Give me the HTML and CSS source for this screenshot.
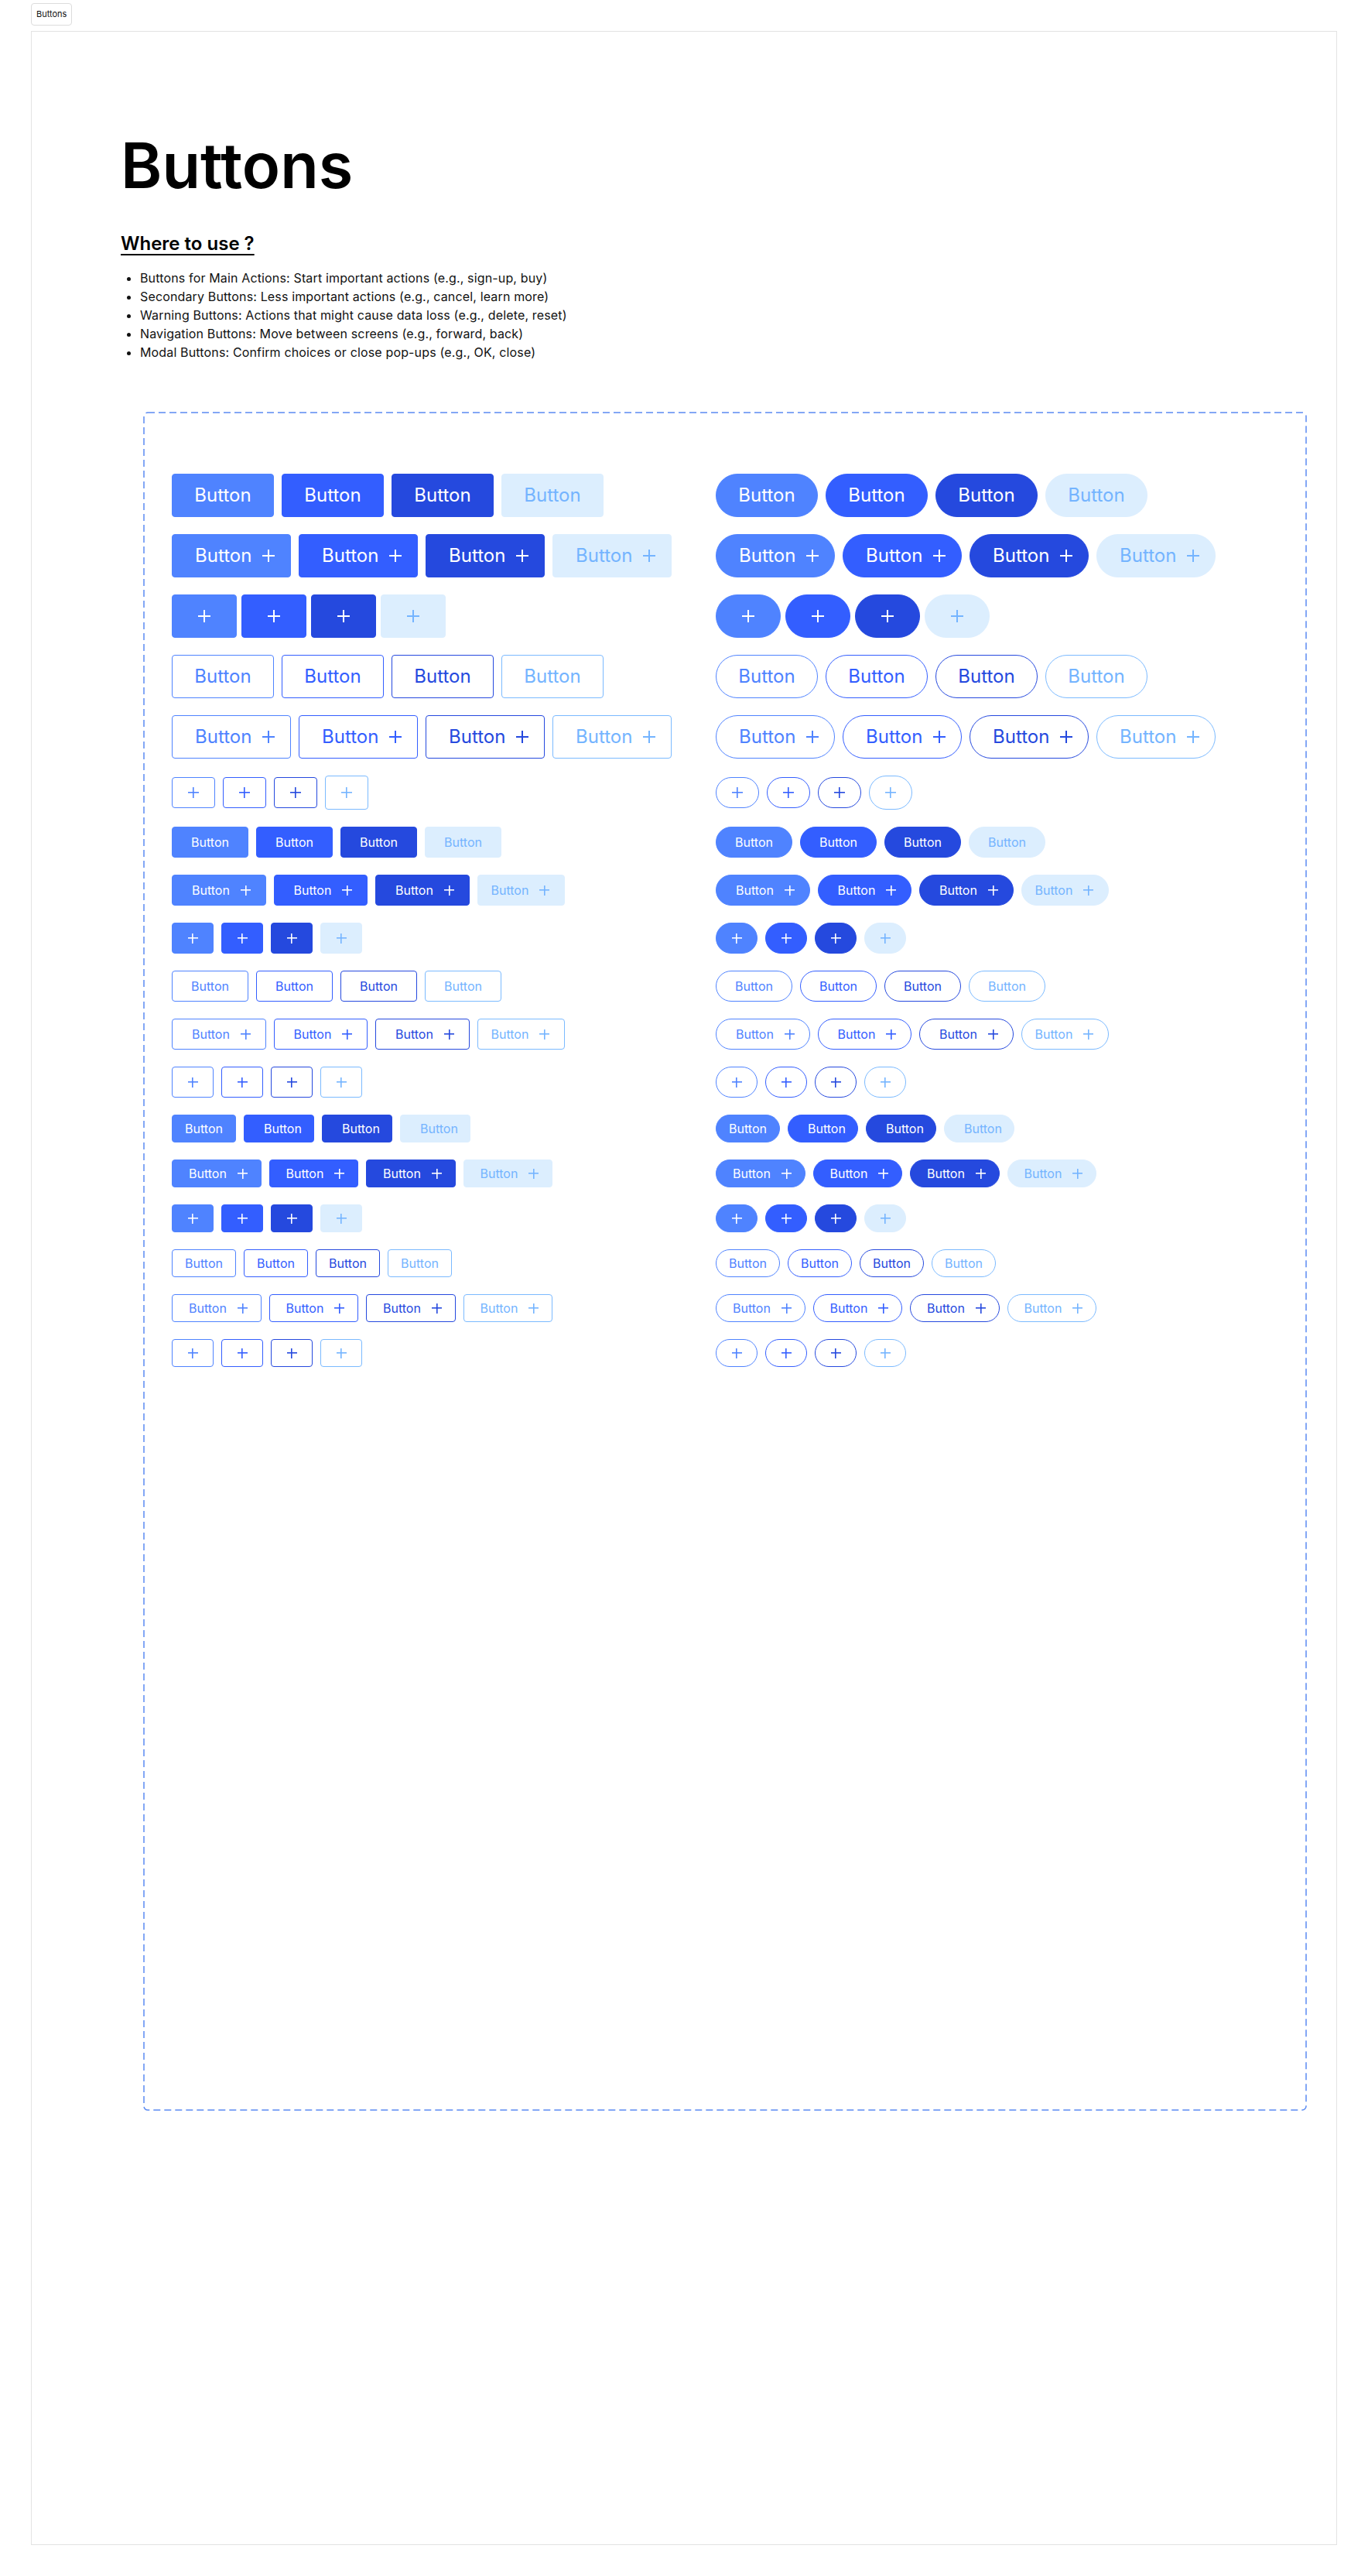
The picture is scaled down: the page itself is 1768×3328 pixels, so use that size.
FILE: index.html
```html
<html lang="en">
<head>
    <meta charset="UTF-8">
    <meta name="viewport" content="width=device-width, initial-scale=1.0">
    <title>Buttons</title>
    <link rel="stylesheet" href="styles.css">
</head>
<body>
    <div class="tab">Buttons</div>
    <main class="frame">
        <h1 class="title">Buttons</h1>
        <h2 class="subtitle">Where to use ?</h2>
        <ul class="uses">
            <li>Buttons for Main Actions: Start important actions (e.g., sign-up, buy)</li>
            <li>Secondary Buttons: Less important actions (e.g., cancel, learn more)</li>
            <li>Warning Buttons: Actions that might cause data loss (e.g., delete, reset)</li>
            <li>Navigation Buttons: Move between screens (e.g., forward, back)</li>
            <li>Modal Buttons: Confirm choices or close pop-ups (e.g., OK, close)</li>
        </ul>

        <section class="board">
            <svg class="board-edge"><rect x="1" y="1" rx="5" ry="5"></rect></svg>

            <!-- square corners -->
            <div class="column square">
                <div class="row lg text fill">
                    <button class="btn t1">Button</button>
                    <button class="btn t2">Button</button>
                    <button class="btn t3">Button</button>
                    <button class="btn t4">Button</button>
                </div>
                <div class="row lg icon-text fill">
                    <button class="btn t1">Button<i class="plus"></i></button>
                    <button class="btn t2">Button<i class="plus"></i></button>
                    <button class="btn t3">Button<i class="plus"></i></button>
                    <button class="btn t4">Button<i class="plus"></i></button>
                </div>
                <div class="row lg icon fill">
                    <button class="btn t1"><i class="plus"></i></button>
                    <button class="btn t2"><i class="plus"></i></button>
                    <button class="btn t3"><i class="plus"></i></button>
                    <button class="btn t4"><i class="plus"></i></button>
                </div>
                <div class="row lg text line">
                    <button class="btn t1">Button</button>
                    <button class="btn t2">Button</button>
                    <button class="btn t3">Button</button>
                    <button class="btn t4">Button</button>
                </div>
                <div class="row lg icon-text line">
                    <button class="btn t1">Button<i class="plus"></i></button>
                    <button class="btn t2">Button<i class="plus"></i></button>
                    <button class="btn t3">Button<i class="plus"></i></button>
                    <button class="btn t4">Button<i class="plus"></i></button>
                </div>
                <div class="row md icon line wide">
                    <button class="btn t1"><i class="plus"></i></button>
                    <button class="btn t2"><i class="plus"></i></button>
                    <button class="btn t3"><i class="plus"></i></button>
                    <button class="btn t4"><i class="plus"></i></button>
                </div>

                <div class="row md text fill">
                    <button class="btn t1">Button</button>
                    <button class="btn t2">Button</button>
                    <button class="btn t3">Button</button>
                    <button class="btn t4">Button</button>
                </div>
                <div class="row md icon-text fill">
                    <button class="btn t1">Button<i class="plus"></i></button>
                    <button class="btn t2">Button<i class="plus"></i></button>
                    <button class="btn t3">Button<i class="plus"></i></button>
                    <button class="btn t4">Button<i class="plus"></i></button>
                </div>
                <div class="row md icon fill">
                    <button class="btn t1"><i class="plus"></i></button>
                    <button class="btn t2"><i class="plus"></i></button>
                    <button class="btn t3"><i class="plus"></i></button>
                    <button class="btn t4"><i class="plus"></i></button>
                </div>
                <div class="row md text line">
                    <button class="btn t1">Button</button>
                    <button class="btn t2">Button</button>
                    <button class="btn t3">Button</button>
                    <button class="btn t4">Button</button>
                </div>
                <div class="row md icon-text line">
                    <button class="btn t1">Button<i class="plus"></i></button>
                    <button class="btn t2">Button<i class="plus"></i></button>
                    <button class="btn t3">Button<i class="plus"></i></button>
                    <button class="btn t4">Button<i class="plus"></i></button>
                </div>
                <div class="row md icon line">
                    <button class="btn t1"><i class="plus"></i></button>
                    <button class="btn t2"><i class="plus"></i></button>
                    <button class="btn t3"><i class="plus"></i></button>
                    <button class="btn t4"><i class="plus"></i></button>
                </div>

                <div class="row sm text fill">
                    <button class="btn t1">Button</button>
                    <button class="btn t2">Button</button>
                    <button class="btn t3">Button</button>
                    <button class="btn t4">Button</button>
                </div>
                <div class="row sm icon-text fill">
                    <button class="btn t1">Button<i class="plus"></i></button>
                    <button class="btn t2">Button<i class="plus"></i></button>
                    <button class="btn t3">Button<i class="plus"></i></button>
                    <button class="btn t4">Button<i class="plus"></i></button>
                </div>
                <div class="row sm icon fill">
                    <button class="btn t1"><i class="plus"></i></button>
                    <button class="btn t2"><i class="plus"></i></button>
                    <button class="btn t3"><i class="plus"></i></button>
                    <button class="btn t4"><i class="plus"></i></button>
                </div>
                <div class="row sm text line">
                    <button class="btn t1">Button</button>
                    <button class="btn t2">Button</button>
                    <button class="btn t3">Button</button>
                    <button class="btn t4">Button</button>
                </div>
                <div class="row sm icon-text line">
                    <button class="btn t1">Button<i class="plus"></i></button>
                    <button class="btn t2">Button<i class="plus"></i></button>
                    <button class="btn t3">Button<i class="plus"></i></button>
                    <button class="btn t4">Button<i class="plus"></i></button>
                </div>
                <div class="row sm icon line">
                    <button class="btn t1"><i class="plus"></i></button>
                    <button class="btn t2"><i class="plus"></i></button>
                    <button class="btn t3"><i class="plus"></i></button>
                    <button class="btn t4"><i class="plus"></i></button>
                </div>
            </div>

            <!-- round corners -->
            <div class="column pill">
                <div class="row lg text fill">
                    <button class="btn t1">Button</button>
                    <button class="btn t2">Button</button>
                    <button class="btn t3">Button</button>
                    <button class="btn t4">Button</button>
                </div>
                <div class="row lg icon-text fill">
                    <button class="btn t1">Button<i class="plus"></i></button>
                    <button class="btn t2">Button<i class="plus"></i></button>
                    <button class="btn t3">Button<i class="plus"></i></button>
                    <button class="btn t4">Button<i class="plus"></i></button>
                </div>
                <div class="row lg icon fill">
                    <button class="btn t1"><i class="plus"></i></button>
                    <button class="btn t2"><i class="plus"></i></button>
                    <button class="btn t3"><i class="plus"></i></button>
                    <button class="btn t4"><i class="plus"></i></button>
                </div>
                <div class="row lg text line">
                    <button class="btn t1">Button</button>
                    <button class="btn t2">Button</button>
                    <button class="btn t3">Button</button>
                    <button class="btn t4">Button</button>
                </div>
                <div class="row lg icon-text line">
                    <button class="btn t1">Button<i class="plus"></i></button>
                    <button class="btn t2">Button<i class="plus"></i></button>
                    <button class="btn t3">Button<i class="plus"></i></button>
                    <button class="btn t4">Button<i class="plus"></i></button>
                </div>
                <div class="row md icon line wide">
                    <button class="btn t1"><i class="plus"></i></button>
                    <button class="btn t2"><i class="plus"></i></button>
                    <button class="btn t3"><i class="plus"></i></button>
                    <button class="btn t4"><i class="plus"></i></button>
                </div>

                <div class="row md text fill">
                    <button class="btn t1">Button</button>
                    <button class="btn t2">Button</button>
                    <button class="btn t3">Button</button>
                    <button class="btn t4">Button</button>
                </div>
                <div class="row md icon-text fill">
                    <button class="btn t1">Button<i class="plus"></i></button>
                    <button class="btn t2">Button<i class="plus"></i></button>
                    <button class="btn t3">Button<i class="plus"></i></button>
                    <button class="btn t4">Button<i class="plus"></i></button>
                </div>
                <div class="row md icon fill">
                    <button class="btn t1"><i class="plus"></i></button>
                    <button class="btn t2"><i class="plus"></i></button>
                    <button class="btn t3"><i class="plus"></i></button>
                    <button class="btn t4"><i class="plus"></i></button>
                </div>
                <div class="row md text line">
                    <button class="btn t1">Button</button>
                    <button class="btn t2">Button</button>
                    <button class="btn t3">Button</button>
                    <button class="btn t4">Button</button>
                </div>
                <div class="row md icon-text line">
                    <button class="btn t1">Button<i class="plus"></i></button>
                    <button class="btn t2">Button<i class="plus"></i></button>
                    <button class="btn t3">Button<i class="plus"></i></button>
                    <button class="btn t4">Button<i class="plus"></i></button>
                </div>
                <div class="row md icon line">
                    <button class="btn t1"><i class="plus"></i></button>
                    <button class="btn t2"><i class="plus"></i></button>
                    <button class="btn t3"><i class="plus"></i></button>
                    <button class="btn t4"><i class="plus"></i></button>
                </div>

                <div class="row sm text fill">
                    <button class="btn t1">Button</button>
                    <button class="btn t2">Button</button>
                    <button class="btn t3">Button</button>
                    <button class="btn t4">Button</button>
                </div>
                <div class="row sm icon-text fill">
                    <button class="btn t1">Button<i class="plus"></i></button>
                    <button class="btn t2">Button<i class="plus"></i></button>
                    <button class="btn t3">Button<i class="plus"></i></button>
                    <button class="btn t4">Button<i class="plus"></i></button>
                </div>
                <div class="row sm icon fill">
                    <button class="btn t1"><i class="plus"></i></button>
                    <button class="btn t2"><i class="plus"></i></button>
                    <button class="btn t3"><i class="plus"></i></button>
                    <button class="btn t4"><i class="plus"></i></button>
                </div>
                <div class="row sm text line">
                    <button class="btn t1">Button</button>
                    <button class="btn t2">Button</button>
                    <button class="btn t3">Button</button>
                    <button class="btn t4">Button</button>
                </div>
                <div class="row sm icon-text line">
                    <button class="btn t1">Button<i class="plus"></i></button>
                    <button class="btn t2">Button<i class="plus"></i></button>
                    <button class="btn t3">Button<i class="plus"></i></button>
                    <button class="btn t4">Button<i class="plus"></i></button>
                </div>
                <div class="row sm icon line">
                    <button class="btn t1"><i class="plus"></i></button>
                    <button class="btn t2"><i class="plus"></i></button>
                    <button class="btn t3"><i class="plus"></i></button>
                    <button class="btn t4"><i class="plus"></i></button>
                </div>
            </div>
        </section>
    </main>
</body>
</html>
```

FILE: styles.css
```css
body {
    margin: 0;
    padding: 4px 40px 0;
    font-family: Inter, "Liberation Sans", sans-serif;
    color: #000;
    background-color: #fff;
}

.tab {
    display: inline-block;
    box-sizing: border-box;
    height: 29px;
    padding: 0 6px;
    line-height: 27px;
    font-size: 11px;
    color: #111;
    border: 1px solid #dcdcdc;
    border-radius: 4px;
    vertical-align: top;
}

.frame {
    display: block;
    box-sizing: border-box;
    height: 3248px;
    margin-top: 7px;
    padding: 125px 0 0 115px;
    border: 1px solid #e3e3e3;
}

.title {
    margin: 0;
    font-size: 81px;
    font-weight: 600;
    line-height: 96px;
}

.subtitle {
    margin: 38px 0 0;
    font-size: 24px;
    font-weight: 600;
    text-decoration: underline;
    text-decoration-thickness: 2px;
    text-underline-offset: 5px;
}

.uses {
    margin: 18px 0 0;
    padding-left: 25px;
    font-size: 16px;
    line-height: 24px;
    letter-spacing: 0.15px;
    color: #111;
}

/* board with the dashed edge */
.board {
    position: relative;
    box-sizing: border-box;
    width: 1504px;
    height: 2195px;
    margin: 65px 0 0 29px;
    padding: 80px 0 0 37px;
    display: grid;
    grid-template-columns: 703px 1fr;
    align-items: start;
}

.board-edge {
    position: absolute;
    inset: 0;
    width: 100%;
    height: 100%;
    pointer-events: none;
}
.board-edge rect {
    width: calc(100% - 2px);
    height: calc(100% - 2px);
    fill: none;
    stroke: #5b8bf2;
    stroke-width: 1.5;
    stroke-dasharray: 9 5;
}

.column {
    display: flex;
    flex-direction: column;
    gap: 22px;
}

.row {
    display: flex;
    align-items: center;
    gap: 10px;
}

/* button base */
.btn {
    display: inline-flex;
    align-items: center;
    justify-content: center;
    box-sizing: border-box;
    margin: 0;
    padding: 0;
    font-family: Inter, "Liberation Sans", sans-serif;
    font-weight: 400;
    line-height: 1;
    white-space: nowrap;
    border: 1px solid transparent;
    border-radius: 4px;
    cursor: pointer;
}
.pill .btn {
    border-radius: 999px;
}

.plus {
    flex: none;
    display: block;
    width: 16px;
    height: 16px;
    background:
        linear-gradient(currentColor, currentColor) center / 100% 2px no-repeat,
        linear-gradient(currentColor, currentColor) center / 2px 100% no-repeat;
}

/* tones */
.fill .t1 { background-color: #4f83ff; border-color: #4f83ff; color: #fff; }
.fill .t2 { background-color: #335eff; border-color: #335eff; color: #fff; }
.fill .t3 { background-color: #2549de; border-color: #2549de; color: #fff; }
.fill .t4 { background-color: #dceefe; border-color: #dceefe; color: #74b4ff; }

.line .btn { background-color: #fff; }
.line .t1 { border-color: #4f83ff; color: #4f83ff; }
.line .t2 { border-color: #335eff; color: #335eff; }
.line .t3 { border-color: #2549de; color: #2549de; }
.line .t4 { border-color: #7bbaff; color: #74b4ff; }

/* large */
.lg .btn { height: 56px; font-size: 24px; }
.lg.text .btn { width: 132px; }
.lg.icon-text .btn {
    width: 154px;
    padding-left: 29px;
    justify-content: flex-start;
    gap: 14px;
}
.lg.icon { gap: 6px; }
.lg.icon .btn { width: 84px; }

/* medium */
.md .btn { height: 40px; font-size: 16px; }
.md .plus, .sm .plus {
    width: 13px;
    height: 13px;
    background-size: 100% 1.6px, 1.6px 100%;
}
.md.text .btn { width: 99px; }
.md.icon-text .btn {
    width: 121.5px;
    padding-left: 25px;
    justify-content: flex-start;
    gap: 14px;
}
.md.icon-text .t4 { width: 113px; padding-left: 17px; }
.md.icon .btn { width: 54px; }
.md.icon.wide .btn { width: 56px; }
.md.icon.wide .plus { width: 14px; height: 14px; }
.md.icon.wide .t4 { height: 44px; }

/* small */
.sm .btn { height: 36px; font-size: 16px; }
.sm.text .btn { width: 83px; }
.sm.text.fill .btn + .btn {
    width: 91px;
    padding-left: 25px;
    justify-content: flex-start;
}
.sm.icon-text .btn {
    width: 115.5px;
    padding-left: 21px;
    justify-content: flex-start;
    gap: 14px;
}
.sm.icon .btn { width: 54px; }
```
